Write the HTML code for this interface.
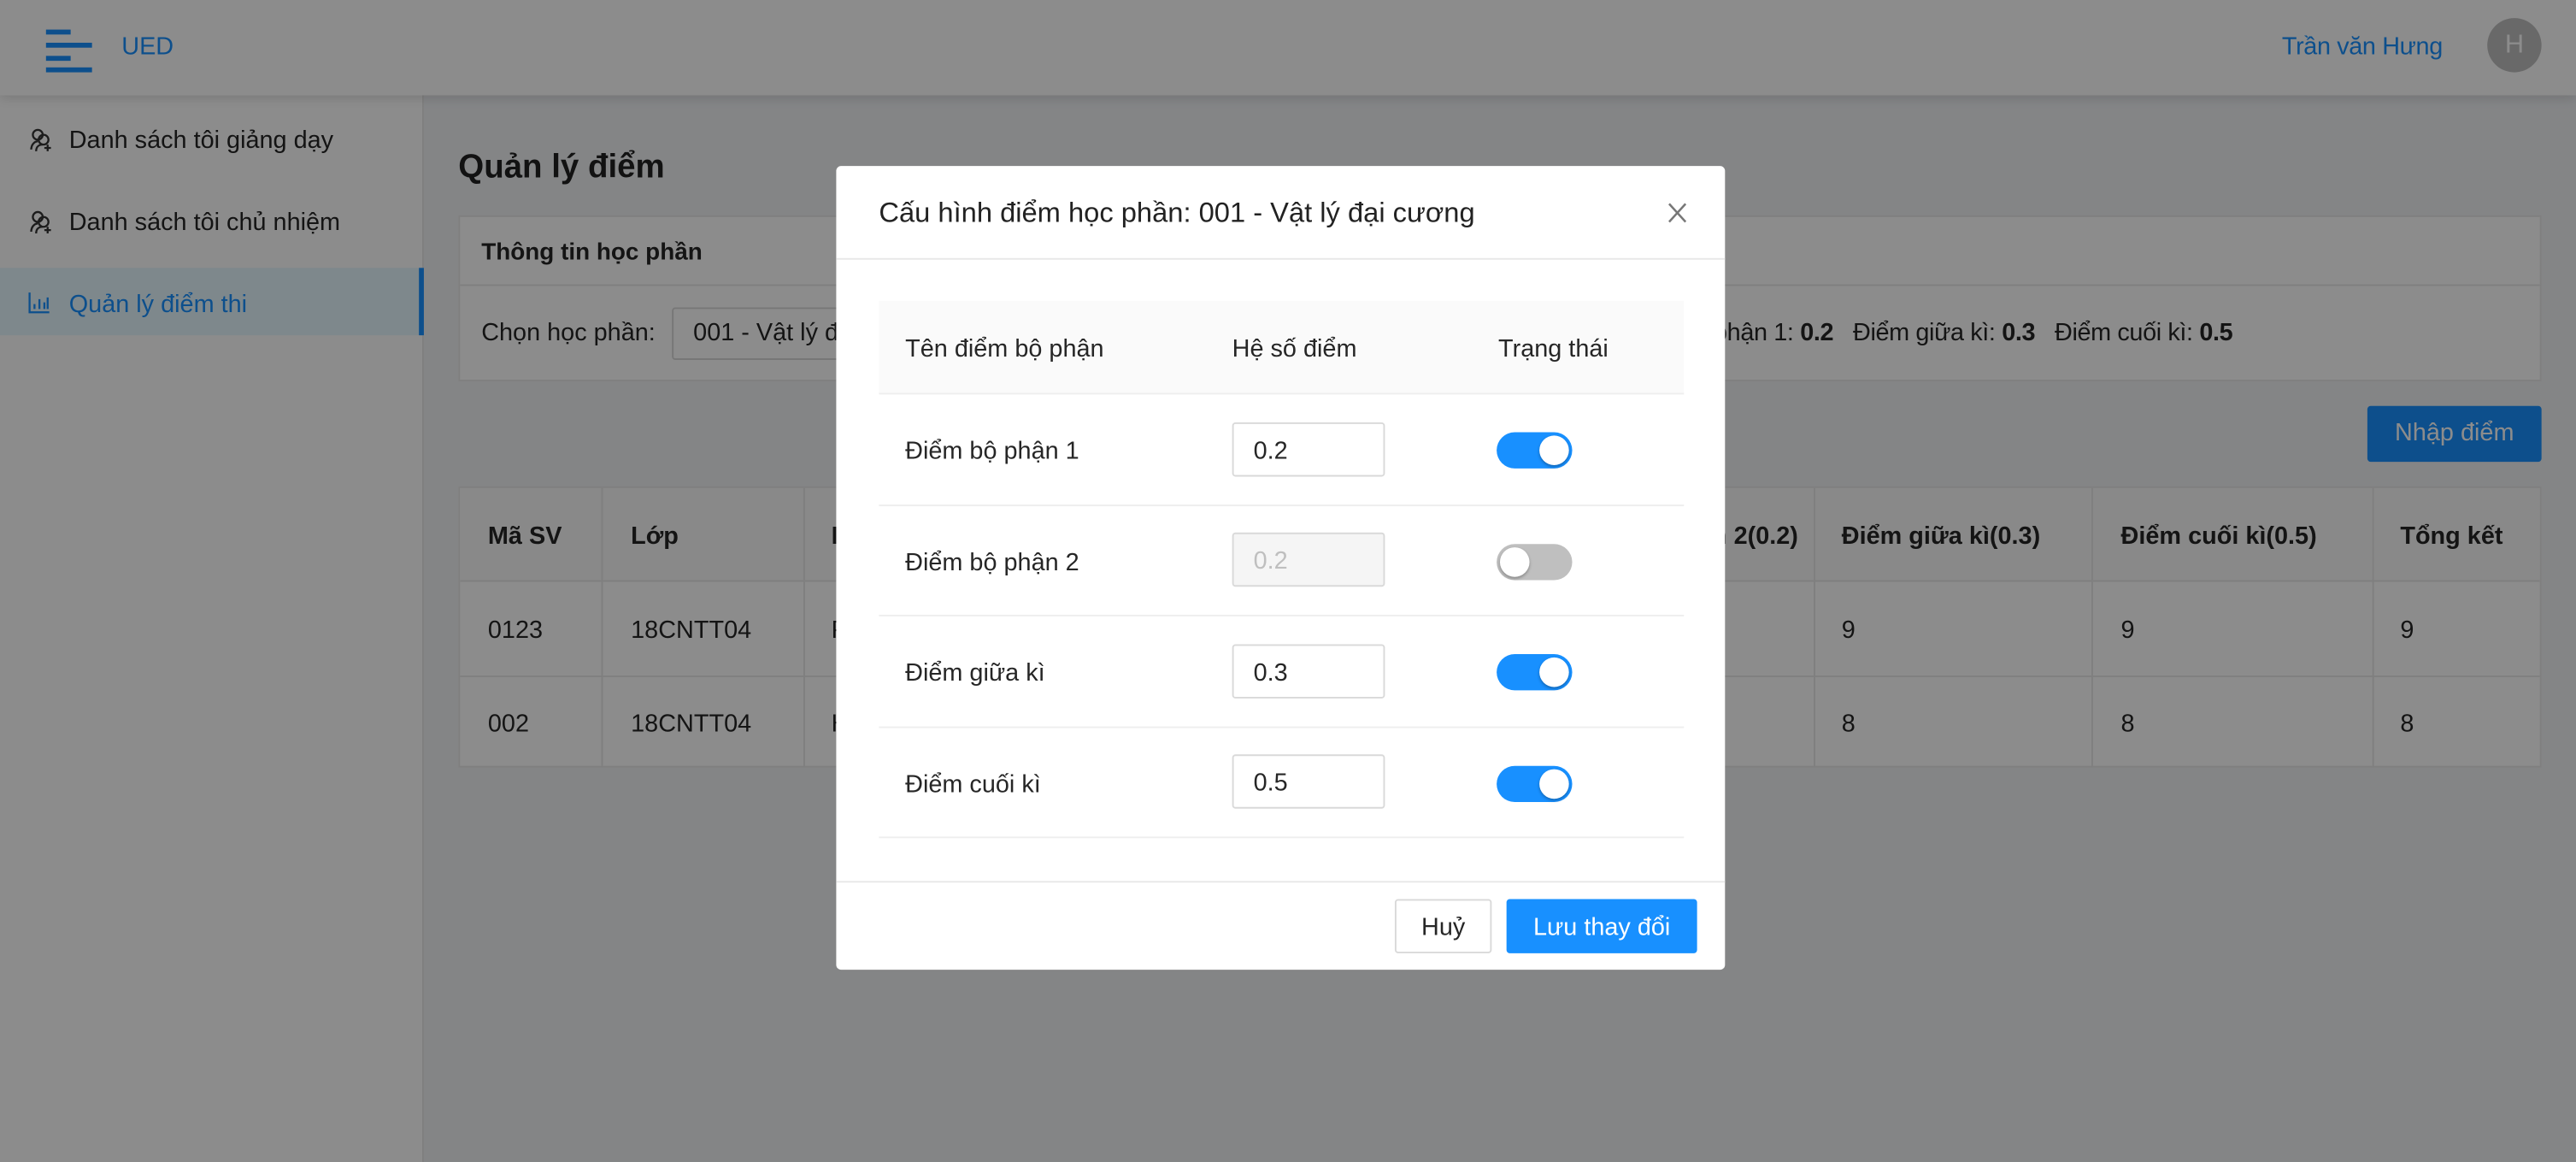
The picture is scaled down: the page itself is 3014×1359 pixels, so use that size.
<!DOCTYPE html>
<html><head><meta charset="utf-8">
<style>
*{box-sizing:border-box;margin:0;padding:0}
html,body{width:3014px;height:1358px;overflow:hidden;background:#f0f2f5}
#w{position:absolute;left:0;top:0;width:1568px;height:707px;transform:scale(1.9222);transform-origin:0 0;font-family:"Liberation Sans","Noto Sans CJK SC",sans-serif;font-size:15px;color:#262626;background:#f0f2f5}
.a{position:absolute;white-space:nowrap}
.hd{left:0;top:0;width:1568px;height:58px;background:#fff;box-shadow:0 2px 6px rgba(0,0,0,.12);z-index:2}
.sb{left:0;top:58px;width:258px;height:649px;background:#fff;border-right:1px solid #e8e8e8}
.card{background:#fff;border:1px solid #e8e8e8}
.ov{left:0;top:0;width:1568px;height:707px;background:rgba(0,0,0,.45);z-index:5}
.md{left:509px;top:101px;width:541px;height:489px;background:#fff;border-radius:3px;z-index:6}
.inp{width:93px;height:33px;border:1px solid #d9d9d9;border-radius:2px;padding:0 12px;line-height:33px}
.sw{width:46px;height:22px;border-radius:11px;background:#1890ff}
.sw i{position:absolute;top:2px;left:26px;width:18px;height:18px;border-radius:50%;background:#fff;box-shadow:0 1px 2px rgba(0,0,0,.3)}
.vl{position:absolute;top:0;width:1px;height:170px;background:#e8e8e8}
</style></head><body><div id="w">
<div class="a hd">
 <div class="a" style="left:28px;top:18px;width:15px;height:3px;background:#1890ff"></div>
 <div class="a" style="left:28px;top:26px;width:28px;height:3px;background:#1890ff"></div>
 <div class="a" style="left:28px;top:34px;width:15px;height:3px;background:#1890ff"></div>
 <div class="a" style="left:28px;top:41px;width:28px;height:3px;background:#1890ff"></div>
 <div class="a" style="left:74px;top:20px;color:#1890ff;font-size:15px">UED</div>
 <div class="a" style="left:1389px;top:20px;color:#1890ff;font-size:15px;letter-spacing:-0.2px">Trần văn Hưng</div>
 <div class="a" style="left:1514px;top:11px;width:33px;height:33px;border-radius:50%;background:#bfbfbf;color:#fff;text-align:center;line-height:33px;font-size:16px">H</div>
</div>
<div class="a sb">
 <svg class="a" style="left:17px;top:19px" width="16" height="16" viewBox="0 0 16 16" fill="none" stroke="#333" stroke-width="1.2"><circle cx="6" cy="5" r="3"/><circle cx="9.5" cy="8" r="3"/><path d="M2 14c0-3 2-5 4-5M5 15c0-3 2-4 4-4M12 11v4M10 13h4"/></svg>
 <div class="a" style="left:42px;top:19px">Danh sách tôi giảng dạy</div>
 <svg class="a" style="left:17px;top:69px" width="16" height="16" viewBox="0 0 16 16" fill="none" stroke="#333" stroke-width="1.2"><circle cx="6" cy="5" r="3"/><circle cx="9.5" cy="8" r="3"/><path d="M2 14c0-3 2-5 4-5M5 15c0-3 2-4 4-4M12 11v4M10 13h4"/></svg>
 <div class="a" style="left:42px;top:69px">Danh sách tôi chủ nhiệm</div>
 <div class="a" style="left:0;top:105px;width:258px;height:41px;background:#e6f7ff;border-right:3px solid #1890ff"></div>
 <svg class="a" style="left:17px;top:119px" width="14" height="14" viewBox="0 0 14 14" fill="none" stroke="#1890ff" stroke-width="1.2"><path d="M1 1v12h12M4 11V8M7 11V5M10 11V7M12 11V4"/></svg>
 <div class="a" style="left:42px;top:119px;color:#1890ff">Quản lý điểm thi</div>
</div>
<div class="a" style="left:279px;top:91px;font-size:20px;font-weight:bold;color:#222">Quản lý điểm</div>
<div class="a card" style="left:279px;top:131px;width:1268px;height:101px">
 <div class="a" style="left:13px;top:14px;font-weight:bold;font-size:14.5px">Thông tin học phần</div>
 <div class="a" style="left:0;top:41px;width:1266px;height:1px;background:#e8e8e8"></div>
 <div class="a" style="left:13px;top:62px">Chọn học phần:</div>
 <div class="a" style="left:129px;top:55px;width:300px;height:32px;border:1px solid #d9d9d9;border-radius:2px;padding:0 12px;line-height:30px">001 - Vật lý đại cương</div>
 <div class="a" style="right:187px;top:62px;letter-spacing:-0.2px">Điểm bộ phận 1: <b>0.2</b> &nbsp; Điểm giữa kì: <b>0.3</b> &nbsp; Điểm cuối kì: <b>0.5</b></div>
</div>
<div class="a" style="left:1441px;top:247px;width:106px;height:34px;background:#1890ff;color:#fff;border-radius:2px;text-align:center;line-height:34px">Nhập điểm</div>
<div class="a card" style="left:279px;top:296px;width:1268px;height:171px">
 <div class="a" style="left:0;top:0;width:1266px;height:57px;background:#fafafa;border-bottom:1px solid #e8e8e8"></div>
 <div class="a" style="left:0;top:114px;width:1266px;height:1px;background:#e8e8e8"></div>
 <div class="vl" style="left:86px"></div><div class="vl" style="left:209px"></div><div class="vl" style="left:494px"></div><div class="vl" style="left:654px"></div><div class="vl" style="left:824px"></div><div class="vl" style="left:993px"></div><div class="vl" style="left:1164px"></div>
 <div class="a" style="left:17px;top:21px;font-weight:bold">Mã SV</div><div class="a" style="left:104px;top:21px;font-weight:bold">Lớp</div><div class="a" style="left:226px;top:21px;font-weight:bold">Họ tên</div><div class="a" style="left:511px;top:21px;font-weight:bold">Điểm bộ phận 1(0.2)</div><div class="a" style="left:672px;top:21px;font-weight:bold">Điểm bộ phận 2(0.2)</div><div class="a" style="left:841px;top:21px;font-weight:bold">Điểm giữa kì(0.3)</div><div class="a" style="left:1011px;top:21px;font-weight:bold">Điểm cuối kì(0.5)</div><div class="a" style="left:1181px;top:21px;font-weight:bold">Tổng kết</div>
 <div class="a" style="left:17px;top:78px">0123</div><div class="a" style="left:104px;top:78px">18CNTT04</div><div class="a" style="left:226px;top:78px">Phạm Văn A</div><div class="a" style="left:841px;top:78px">9</div><div class="a" style="left:1011px;top:78px">9</div><div class="a" style="left:1181px;top:78px">9</div>
 <div class="a" style="left:17px;top:135px">002</div><div class="a" style="left:104px;top:135px">18CNTT04</div><div class="a" style="left:226px;top:135px">Hoàng Văn B</div><div class="a" style="left:841px;top:135px">8</div><div class="a" style="left:1011px;top:135px">8</div><div class="a" style="left:1181px;top:135px">8</div>
</div>
<div class="a ov"></div>
<div class="a md">
 <div class="a" style="left:26px;top:19px;font-size:17px;color:#222">Cấu hình điểm học phần: 001 - Vật lý đại cương</div>
 <svg class="a" style="left:506px;top:22px" width="12" height="13" viewBox="0 0 12 13" stroke="#777" stroke-width="1.3"><path d="M1 1l10 11M11 1L1 12"/></svg>
 <div class="a" style="left:0;top:56px;width:541px;height:1px;background:#e8e8e8"></div>
 <div class="a" style="left:26px;top:82px;width:490px;height:57px;background:#fafafa;border-bottom:1px solid #eee"></div>
 <div class="a" style="left:42px;top:103px">Tên điểm bộ phận</div>
 <div class="a" style="left:241px;top:103px">Hệ số điểm</div>
 <div class="a" style="left:403px;top:103px">Trạng thái</div>
 <div class="a" style="left:26px;top:206px;width:490px;height:1px;background:#eee"></div>
 <div class="a" style="left:26px;top:273px;width:490px;height:1px;background:#eee"></div>
 <div class="a" style="left:26px;top:341px;width:490px;height:1px;background:#eee"></div>
 <div class="a" style="left:26px;top:408px;width:490px;height:1px;background:#eee"></div>
 <div class="a" style="left:42px;top:165px">Điểm bộ phận 1</div>
 <div class="a inp" style="left:241px;top:156px">0.2</div>
 <div class="a sw" style="left:402px;top:162px"><i></i></div>
 <div class="a" style="left:42px;top:233px">Điểm bộ phận 2</div>
 <div class="a inp" style="left:241px;top:223px;background:#f5f5f5;color:#bfbfbf">0.2</div>
 <div class="a sw" style="left:402px;top:230px;background:#bfbfbf"><i style="left:2px"></i></div>
 <div class="a" style="left:42px;top:300px">Điểm giữa kì</div>
 <div class="a inp" style="left:241px;top:291px">0.3</div>
 <div class="a sw" style="left:402px;top:297px"><i></i></div>
 <div class="a" style="left:42px;top:368px">Điểm cuối kì</div>
 <div class="a inp" style="left:241px;top:358px">0.5</div>
 <div class="a sw" style="left:402px;top:365px"><i></i></div>
 <div class="a" style="left:0;top:435px;width:541px;height:1px;background:#e8e8e8"></div>
 <div class="a" style="left:340px;top:446px;width:59px;height:33px;border:1px solid #d9d9d9;border-radius:2px;text-align:center;line-height:33px">Huỷ</div>
 <div class="a" style="left:408px;top:446px;width:116px;height:33px;background:#1890ff;color:#fff;border-radius:2px;text-align:center;line-height:35px">Lưu thay đổi</div>
</div>
</div></body></html>
